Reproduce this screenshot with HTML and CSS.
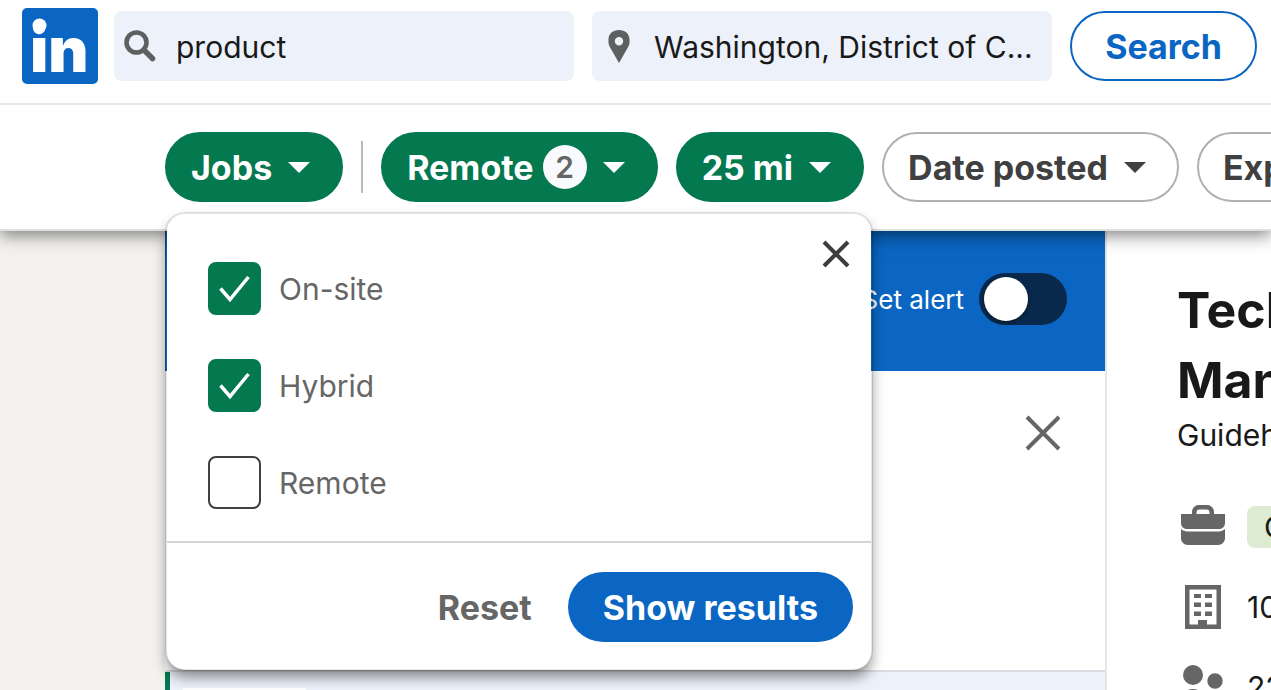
FILE: index.html
```html
<!DOCTYPE html>
<html lang="en">
<head>
<meta charset="utf-8">
<title>Job search</title>
<link rel="stylesheet" href="styles.css">
</head>
<body>
<header class="topbar">
  <a class="logo" href="#" aria-label="LinkedIn">
    <svg viewBox="0 0 76 76" aria-hidden="true">
      <rect width="76" height="76" rx="5" fill="#0a66c2"/>
      <text class="logo-text" x="8" y="64">in</text>
      <circle cx="17.500" cy="17.500" r="7" fill="#fff"/>
    </svg>
  </a>
  <div class="search-fields">
    <label class="field">
      <svg class="icon-search" viewBox="0 0 32 32" aria-hidden="true"><circle cx="12.500" cy="12.500" r="10" fill="none" stroke="#5e5f61" stroke-width="4.600"/><path d="M20 20l8.500 8.500" stroke="#5e5f61" stroke-width="5.500" stroke-linecap="round"/></svg>
      <input type="text" value="product" aria-label="Search by title, skill, or company">
    </label>
    <label class="field field-place">
      <svg class="icon-pin" viewBox="0 0 24 34" aria-hidden="true"><path fill="#5e5f61" fill-rule="evenodd" d="M12 1C6 1 1.500 4.600 1.500 10.500V13c0 2 .6 3.500 1.500 5.300L12 34l9-15.700c.9-1.800 1.500-3.300 1.500-5.300V10.500C22.500 4.600 18 1 12 1zm0 7a4.200 4.200 0 1 1 0 8.400A4.200 4.200 0 0 1 12 8z"/></svg>
      <input type="text" value="Washington, District of C..." aria-label="City, state, or zip code">
    </label>
  </div>
  <button class="search-btn" type="button">Search</button>
</header>

<nav class="filters" aria-label="Filters">
  <button class="pill pill-on" type="button">Jobs<span class="caret"></span></button>
  <span class="divider"></span>
  <button class="pill pill-on" type="button" aria-expanded="true">Remote<span class="count">2</span><span class="caret"></span></button>
  <button class="pill pill-on" type="button">25 mi<span class="caret"></span></button>
  <button class="pill" type="button">Date posted<span class="caret"></span></button>
  <button class="pill" type="button">Experience level<span class="caret"></span></button>

  <form class="popup">
    <button class="popup-close" type="button" aria-label="Close">
      <svg viewBox="0 0 28 28" aria-hidden="true"><path d="M2 2l24 24M26 2L2 26" stroke="#3d3d3d" stroke-width="4"/></svg>
    </button>
    <div class="options">
      <label class="option">
        <span class="check"><input type="checkbox" checked><svg viewBox="0 0 53 53" aria-hidden="true"><path d="M12.500 26.500L22 37.500 40.500 15" fill="none" stroke="#fff" stroke-width="3.500"/></svg></span>On-site
      </label>
      <label class="option">
        <span class="check"><input type="checkbox" checked><svg viewBox="0 0 53 53" aria-hidden="true"><path d="M12.500 26.500L22 37.500 40.500 15" fill="none" stroke="#fff" stroke-width="3.500"/></svg></span>Hybrid
      </label>
      <label class="option">
        <span class="check"><input type="checkbox"></span>Remote
      </label>
    </div>
    <div class="popup-actions">
      <button class="reset" type="button">Reset</button>
      <button class="show" type="button">Show results</button>
    </div>
  </form>
</nav>

<main class="content">
  <section class="results">
    <div class="alert-bar">
      <label class="alert">Set alert<input class="switch" type="checkbox" role="switch"></label>
    </div>
    <div class="notice">
      <button class="dismiss" type="button" aria-label="Dismiss">
        <svg viewBox="0 0 36 36" aria-hidden="true"><path d="M2 2l32 32M34 2L2 34" stroke="#666" stroke-width="4"/></svg>
      </button>
    </div>
    <div class="job-card"><div class="company-logo"></div></div>
  </section>
  <article class="details">
    <h1 class="job-title">Technical<br>Manager</h1>
    <p class="company">Guidehouse</p>
    <ul class="facts">
      <li>
        <svg viewBox="0 0 46 46" aria-hidden="true"><g fill="#666"><path fill-rule="evenodd" d="M12 10V8c0-4 3-7 7-7h8c4 0 7 3 7 7v2h11v9c0 3.500-2.500 6-6 6H7c-3.500 0-6-2.500-6-6v-9zm4.500 0h13V8.500c0-2-1-3-3-3h-7c-2 0-3 1-3 3z"/><path d="M1 25c1.800 1.500 3.800 2.500 6 2.500h32c2.200 0 4.200-1 6-2.500v9c0 4-3 7-7 7H8c-4 0-7-3-7-7z"/></g></svg>
        <span class="tag">On-site</span>
      </li>
      <li>
        <svg viewBox="0 0 46 46" aria-hidden="true"><path fill="#666" fill-rule="evenodd" d="M5 1h36v44H5zM9.500 5.500v35H18v-4.500h9v4.500h9.500v-35z"/><path fill="#666" d="M14 10h7v4h-7zm11 0h7v4h-7zM14 18.500h7v4.500h-7zm11 0h7v4.500h-7zM14 27.500h7v4.500h-7zm11 0h7v4.500h-7z"/></svg>
        <span>10,001+</span>
      </li>
      <li>
        <svg viewBox="0 0 46 46" aria-hidden="true"><g fill="#666"><circle cx="13" cy="11" r="10"/><circle cx="35" cy="17" r="7.700"/><path d="M1 45V37c0-7 5-12 12-12s12 5 12 12v8zM28 45V32c1.500-2 4-3 7-3 6 0 10 4 10 9v7z"/></g></svg>
        <span>22</span>
      </li>
    </ul>
  </article>
</main>
</body>
</html>
```
FILE: styles.css
```css
* { box-sizing: border-box; }

body {
  margin: 0;
  height: 100vh;
  overflow: hidden;
  display: flex;
  flex-direction: column;
  background: #f3f2ee;
  color: #191919;
  font-family: Inter, "Liberation Sans", sans-serif;
  font-size: 30px;
}

button, input { font: inherit; color: inherit; margin: 0; }
button { cursor: pointer; white-space: nowrap; }
svg { display: block; }

.topbar {
  position: relative;
  z-index: 2;
  display: flex;
  align-items: center;
  flex: none;
  gap: 16px;
  padding: 8px 14px 19px 22px;
  background: #fff;
  border-bottom: 2px solid #e8e8e8;
}
.logo { width: 76px; flex: none; }
.logo-text { font-size: 62px; font-weight: 900; fill: #fff; }
.search-fields {
  display: grid;
  grid-template-columns: repeat(2, minmax(0, 1fr));
  flex: 1;
  gap: 18px;
  min-width: 0;
}
.field {
  display: flex;
  align-items: center;
  height: 70px;
  gap: 20px;
  padding: 0 10px;
  border-radius: 8px;
  background: #edf1fa;
}
.field-place { gap: 23px; padding-left: 15px; }
.icon-search { width: 32px; flex: none; }
.icon-pin { width: 24px; flex: none; }
.field input {
  flex: 1;
  min-width: 0;
  padding: 2px 0 0;
  border: 0;
  outline: 0;
  background: none;
}
.search-btn {
  height: 70px;
  padding: 0 33px;
  margin-left: 2px;
  border: 2px solid #0a66c2;
  border-radius: 35px;
  background: #fff;
  color: #0a66c2;
  font-size: 34px;
  font-weight: 700;
}

.filters {
  position: relative;
  z-index: 1;
  display: flex;
  align-items: center;
  flex: none;
  gap: 18px;
  padding: 27px 0 27px 165px;
  background: #fff;
  border-bottom: 2px solid #e0e0e0;
  box-shadow: 0 4px 16px rgba(0, 0, 0, 0.5);
}
.pill {
  display: flex;
  align-items: center;
  flex: none;
  height: 70px;
  padding: 0 31px 0 24px;
  border: 2px solid #b0b0b0;
  border-radius: 35px;
  background: #fff;
  color: #404040;
  font-size: 34px;
  font-weight: 700;
}
.pill-on { border-color: #04784f; background: #04784f; color: #fff; }
.caret {
  margin-left: 16px;
  border: 11px solid transparent;
  border-top-color: currentColor;
  border-bottom: 0;
}
.count {
  width: 44px;
  margin-left: 9px;
  border-radius: 50%;
  background: #f8fafd;
  color: #666;
  font-size: 30px;
  font-weight: 600;
  line-height: 44px;
}
.divider { flex: none; width: 2px; height: 52px; background: #b8b8b8; }

.popup {
  position: absolute;
  top: 107px;
  left: 165px;
  width: 708px;
  border: 2px solid rgba(0, 0, 0, 0.1);
  border-radius: 20px;
  background: #fff;
  background-clip: padding-box;
  box-shadow: 0 8px 14px -2px rgba(0, 0, 0, 0.45);
}
.popup-close {
  position: absolute;
  top: 26px;
  right: 21px;
  width: 28px;
  padding: 0;
  border: 0;
  background: none;
}
.options {
  display: flex;
  flex-direction: column;
  align-items: flex-start;
  gap: 44px;
  padding: 48px 41px 32px;
}
.option { display: flex; align-items: center; gap: 18px; color: #666; }
.check { display: grid; width: 53px; height: 53px; }
.check > * { grid-area: 1 / 1; width: 53px; height: 53px; pointer-events: none; }
.check input {
  appearance: none;
  border: 2px solid #404040;
  border-radius: 8px;
  background: #fff;
}
.check input:checked { border-color: #04784f; background: #04784f; }
.check svg { z-index: 1; }
.popup-actions {
  display: flex;
  justify-content: flex-end;
  gap: 36px;
  padding: 29px 18px 27px;
  border-top: 2px solid #d4d4d4;
}
.reset, .show { padding: 0; border: 0; background: none; font-size: 34px; font-weight: 700; color: #666; }
.show {
  height: 70px;
  padding: 0 35px;
  border-radius: 35px;
  background: #0a66c2;
  color: #fff;
}

.content {
  display: grid;
  grid-template-columns: 942px 1fr;
  flex: 1;
  min-height: 0;
  margin-left: 165px;
  background: #fff;
}
.results { border-right: 2px solid #e6e6e6; }
.alert-bar {
  display: flex;
  align-items: center;
  justify-content: flex-end;
  height: 140px;
  padding: 0 38px 4px;
  background: #0a66c2;
  color: #fff;
  font-size: 26px;
}
.alert { display: flex; align-items: center; gap: 15px; }
.switch {
  appearance: none;
  width: 88px;
  height: 52px;
  padding: 4px 5px;
  border-radius: 26px;
  background: #09294c;
}
.switch::before {
  content: "";
  display: block;
  width: 44px;
  height: 44px;
  border-radius: 50%;
  background: #fff;
  box-shadow: 0 2px 4px rgba(0, 0, 0, 0.4);
}
.notice {
  display: flex;
  align-items: flex-start;
  justify-content: flex-end;
  height: 301px;
  padding: 44px 44px 0;
  border-bottom: 2px solid #d9dce1;
}
.dismiss { width: 36px; padding: 0; border: 0; background: none; }
.job-card {
  height: 200px;
  padding: 16px 13px;
  border-left: 5px solid #04784f;
  background: #edf1fa;
}
.company-logo { width: 123px; height: 123px; background: #fff; }

.details { padding: 44px 0 0 70px; white-space: nowrap; overflow: hidden; }
.job-title { margin: 0; font-size: 50px; line-height: 70px; font-weight: 700; }
.company { margin: 0; line-height: 40px; }
.facts { display: grid; gap: 34px; margin: 0; padding: 49px 0 0 3px; list-style: none; }
.facts li { display: flex; align-items: center; gap: 21px; height: 46px; }
.facts svg { width: 46px; flex: none; }
.tag { padding: 0 17px; border-radius: 8px; background: #dcebd1; line-height: 42px; }
```
